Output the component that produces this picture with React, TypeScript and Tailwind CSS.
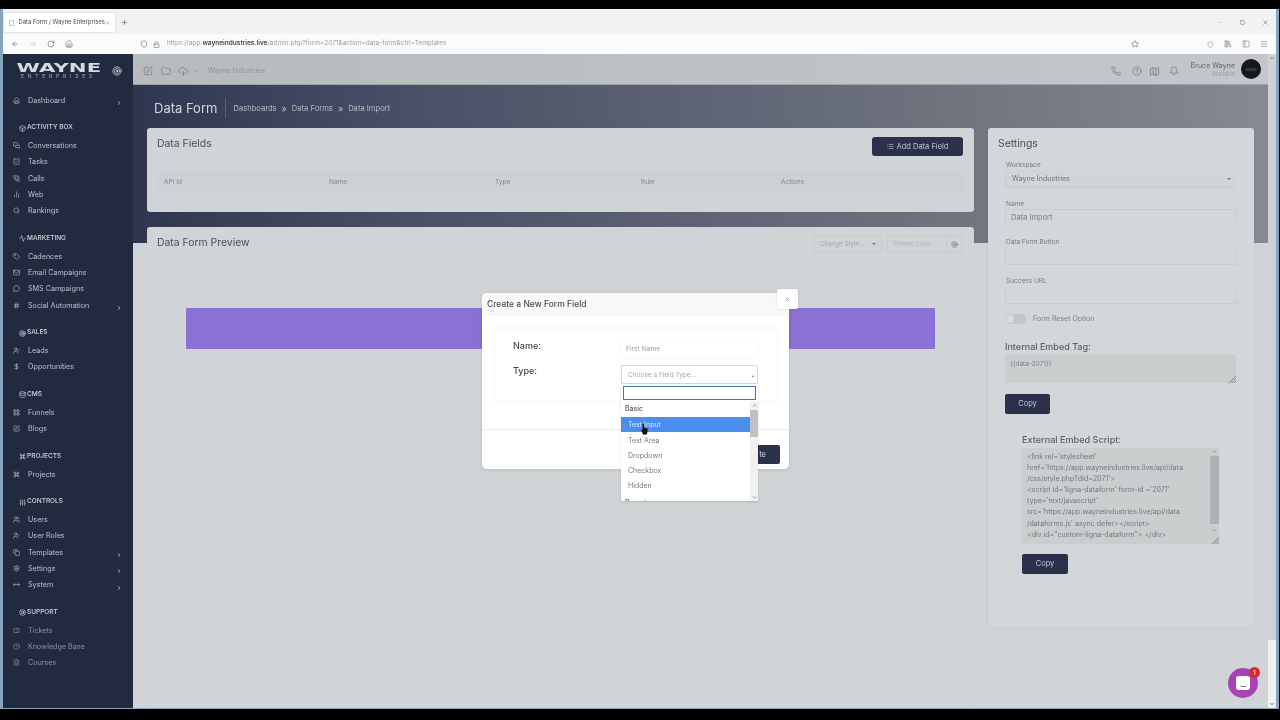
import {
  Activity,
  ArrowLeft,
  ArrowRight,
  BarChart2,
  Bell,
  Box,
  ChevronDown,
  ChevronRight,
  ChevronUp,
  CircleHelp,
  CloudUpload,
  Command,
  Copy,
  Database,
  DollarSign,
  FileText,
  Folder,
  Hash,
  Home,
  House,
  LayoutGrid,
  LibraryBig,
  LifeBuoy,
  List,
  Lock,
  Mail,
  Map,
  Menu,
  MessageCircle,
  MessagesSquare,
  Minus,
  MoveHorizontal,
  PanelLeft,
  Phone,
  PhoneCall,
  Plus,
  RotateCw,
  Search,
  Settings,
  Shield,
  SlidersVertical,
  Square,
  SquareCheck,
  SquarePen,
  Star,
  Tag,
  Target,
  Ticket,
  UserCheck,
  Users,
  X,
} from "lucide-react"

const NavGroups = [
  {
    items: [{ label: "Dashboard", icon: Home, arrow: true }],
  },
  {
    title: "ACTIVITY BOX",
    titleIcon: Box,
    items: [
      { label: "Conversations", icon: MessagesSquare },
      { label: "Tasks", icon: SquareCheck },
      { label: "Calls", icon: PhoneCall },
      { label: "Web", icon: BarChart2 },
      { label: "Rankings", icon: Search },
    ],
  },
  {
    title: "MARKETING",
    titleIcon: Activity,
    items: [
      { label: "Cadences", icon: Tag },
      { label: "Email Campaigns", icon: Mail },
      { label: "SMS Campaigns", icon: MessageCircle },
      { label: "Social Automation", icon: Hash, arrow: true },
    ],
  },
  {
    title: "SALES",
    titleIcon: Target,
    items: [
      { label: "Leads", icon: UserCheck },
      { label: "Opportunities", icon: DollarSign },
    ],
  },
  {
    title: "CMS",
    titleIcon: Database,
    items: [
      { label: "Funnels", icon: LayoutGrid },
      { label: "Blogs", icon: SquarePen },
    ],
  },
  {
    title: "PROJECTS",
    titleIcon: Command,
    items: [{ label: "Projects", icon: Command }],
  },
  {
    title: "CONTROLS",
    titleIcon: SlidersVertical,
    items: [
      { label: "Users", icon: Users },
      { label: "User Roles", icon: UserCheck },
      { label: "Templates", icon: Copy, arrow: true },
      { label: "Settings", icon: Settings, arrow: true },
      { label: "System", icon: MoveHorizontal, arrow: true },
    ],
  },
  {
    title: "SUPPORT",
    titleIcon: LifeBuoy,
    items: [
      { label: "Tickets", icon: Ticket, dim: true },
      { label: "Knowledge Base", icon: CircleHelp, dim: true },
      { label: "Courses", icon: FileText, dim: true },
    ],
  },
]

const FieldTypes = ["Text Area", "Dropdown", "Checkbox", "Hidden"]

function Sidebar() {
  return (
    <aside className="w-[130px] shrink-0 bg-[#222a40] flex flex-col overflow-hidden">
      <div className="h-[31px] shrink-0 flex items-center pl-[14px] pr-[11px] justify-between pt-[3px]">
        <div className="flex flex-col items-center w-[83px]">
          <span className="text-[#d7dade] text-[12.5px] leading-[11px] font-black [font-family:'DejaVu_Sans',sans-serif] scale-x-[1.7]">
            WAYNE
          </span>
          <span className="text-[#a4aab6] text-[5px] leading-[7px] tracking-[3.8px] whitespace-nowrap">
            ENTERPRISES
          </span>
        </div>
        <Target className="w-[10px] h-[10px] text-[#c5c9d0]" />
      </div>
      <nav className="pt-[8px] flex flex-col gap-[11.85px]">
        {NavGroups.map((group, i) => (
          <div key={i} className="flex flex-col">
            {group.title && (
              <div className="h-[14px] mb-[3.3px] pl-[15.5px] flex items-center gap-[1.5px] text-[6.5px] font-medium text-[#d3d6dc]">
                <group.titleIcon className="w-[7px] h-[7px]" />
                {group.title}
              </div>
            )}
            {group.items.map((item) => (
              <div
                key={item.label}
                className={`h-[16.3px] pl-[10px] pr-[11px] flex items-center text-[7.2px] ${
                  "dim" in item && item.dim ? "text-[#8b91a1]" : "text-[#bcc0ca]"
                }`}
              >
                <item.icon className="w-[7px] h-[7px] mr-[8px] mt-[-2px] shrink-0" />
                <span className="flex-1">{item.label}</span>
                {"arrow" in item && item.arrow && (
                  <ChevronRight className="w-[6px] h-[6px] mt-[4px] text-[#d3d6dc]" strokeWidth={3} />
                )}
              </div>
            ))}
          </div>
        ))}
      </nav>
    </aside>
  )
}

function TopBar() {
  return (
    <div className="h-[31px] shrink-0 bg-[linear-gradient(90deg,#b7bbbe,#c3c7c9)] flex items-center pl-[10px] pr-[7px] border-b border-[#9ea3a9]">
      <div className="flex items-center mt-[4px]">
        <SquarePen className="w-[10px] h-[10px] text-[#7f858c] mr-[8px]" />
        <Folder className="w-[10px] h-[10px] text-[#7f858c] mr-[7px]" />
        <CloudUpload className="w-[11px] h-[11px] text-[#7f858c] mr-[4px]" />
        <ChevronDown className="w-[7px] h-[7px] text-[#7f858c] mr-[8px]" />
        <span className="text-[7px] text-[#8f949a]">Wayne Industries</span>
      </div>
      <div className="flex-1" />
      <div className="flex items-center mt-[4px]">
        <Phone className="w-[10px] h-[10px] text-[#7b8087] mr-[11px]" />
        <CircleHelp className="w-[10px] h-[10px] text-[#7b8087] mr-[7px]" />
        <Map className="w-[11px] h-[11px] text-[#7b8087] mr-[9px]" />
        <Bell className="w-[10px] h-[10px] text-[#7b8087] mr-[12px]" />
      </div>
      <div className="flex flex-col items-end mr-[6px]">
        <span className="text-[7px] leading-[9px] font-medium text-[#70757c]">Bruce Wayne</span>
        <span className="text-[5.5px] leading-[8px] text-[#999ea4]">Available</span>
      </div>
      <div className="w-[20px] h-[20px] rounded-full bg-[#16181b] flex items-center justify-center">
        <span className="w-[12px] h-[3px] bg-[#33363a] rounded-full" />
      </div>
    </div>
  )
}

function FieldLabel({ children }: { children: string }) {
  return <div className="text-[6.5px] leading-[8px] text-[#777c82]">{children}</div>
}

function DarkButton({ children, className }: { children: React.ReactNode; className: string }) {
  return (
    <div className={`bg-[#2b304b] rounded-[2px] text-[#c4c7d0] text-[7.5px] flex items-center justify-center ${className}`}>
      {children}
    </div>
  )
}

function ResizeGrip() {
  return (
    <svg width="7" height="7" viewBox="0 0 7 7" className="text-[#777c82]">
      <path d="M7 0L0 7M7 2.5L2.5 7M7 5L5 7" stroke="currentColor" strokeWidth="0.8" />
    </svg>
  )
}

function SettingsCard() {
  return (
    <div className="w-[266px] h-[499px] shrink-0 bg-[#d3d7d9] rounded-[3px] shadow-[0_0_3px_rgba(0,0,0,0.06)] pt-[9px]">
      <div className="pl-[10px] text-[10.4px] leading-[13px] text-[#4a4e54]">Settings</div>
      <div className="pl-[17px] pr-[17px] pt-[11px]">
        <div className="pl-[1px]"><FieldLabel>Workspace</FieldLabel></div>
        <div className="h-[17px] mt-[2px] border-b border-l border-[#c8ccce] bg-[#d1d5d7] flex items-center justify-between px-[6px] text-[7.1px] text-[#6f747a]">
          Wayne Industries
          <span className="w-0 h-0 border-x-[2px] border-x-transparent border-t-[2px] border-t-[#6f747a]" />
        </div>
        <div className="pt-[12px] pl-[1px]"><FieldLabel>Name</FieldLabel></div>
        <div className="h-[16px] mt-[1px] border-t border-x border-[#c8ccce] flex items-center px-[5px] text-[7.5px] text-[#777c82]">
          Data Import
        </div>
        <div className="pt-[13px] pl-[1px]"><FieldLabel>Data Form Button</FieldLabel></div>
        <div className="h-[18px] mt-[1px] border-b border-x border-[#c8ccce]" />
        <div className="pt-[12px] pl-[1px]"><FieldLabel>Success URL</FieldLabel></div>
        <div className="h-[18px] mt-[1px] border-b border-x border-[#c8ccce]" />
        <div className="flex items-center mt-[10px] h-[10px] gap-[7px]">
          <div className="w-[21px] h-[10px] rounded-full bg-[#c2c6c8] flex items-center pl-[1px]">
            <span className="w-[8px] h-[8px] rounded-full bg-[#d8dbdd]" />
          </div>
          <span className="text-[7px] text-[#7d8288]">Form Reset Option</span>
        </div>
        <div className="mt-[18px] text-[9px] leading-[10px] font-medium text-[#5a5f65]">Internal Embed Tag:</div>
        <div className="h-[29px] mt-[2px] w-[231px] bg-[#cacecf] flex justify-between">
          <span className="pl-[5px] pt-[6px] text-[6.5px] text-[#7b8086]">{"{{data-2071}}"}</span>
          <span className="self-end flex"><ResizeGrip /></span>
        </div>
        <DarkButton className="w-[45px] h-[20px] mt-[11px]">Copy</DarkButton>
        <div className="pl-[17px] pt-[21px]">
          <div className="text-[9.1px] leading-[10px] font-medium text-[#5a5f65]">External Embed Script:</div>
          <div className="h-[96px] w-[197px] mt-[3px] bg-[#cacecf] flex">
            <div className="flex-1 min-w-0 pl-[5px] pt-[3px] text-[7.05px] leading-[11.1px] text-[#75797f] whitespace-nowrap">
              <div>{"<link rel='stylesheet'"}</div>
              <div>{"href='https://app.wayneindustries.live/api/data"}</div>
              <div>{"/css/style.php?did=2071'>"}</div>
              <div>{"<script id='ligna-dataform' form-id ='2071'"}</div>
              <div>{"type='text/javascript'"}</div>
              <div>{"src='https://app.wayneindustries.live/api/data"}</div>
              <div>{"/dataforms.js' async defer></script>"}</div>
              <div>{'<div id="custom-ligna-dataform"> </div>'}</div>
            </div>
            <div className="w-[9px] flex flex-col items-center">
              <ChevronUp className="w-[5px] h-[5px] mt-[1px] text-[#6f747a]" strokeWidth={3} />
              <div className="w-[9px] h-[68px] mt-[2px] bg-[#aeb2b4]" />
              <ChevronDown className="w-[5px] h-[5px] mt-[4px] text-[#6f747a]" strokeWidth={3} />
              <div className="flex-1" />
              <span className="self-end flex"><ResizeGrip /></span>
            </div>
          </div>
          <DarkButton className="w-[46px] h-[20px] mt-[10px]">Copy</DarkButton>
        </div>
      </div>
    </div>
  )
}

function Modal() {
  return (
    <div className="absolute left-[482px] top-[293px] w-[307px] h-[176px] bg-white rounded-[5px] shadow-[0_1px_4px_rgba(0,0,0,0.12)]">
      <div className="h-[23px] bg-[#f8f8f8] rounded-t-[5px] flex items-center pl-[5px] text-[8.5px] font-medium text-[#4a4d52]">
        Create a New Form Field
      </div>
      <div className="absolute left-[295px] top-[-4px] w-[21px] h-[20px] bg-white rounded-[2px] shadow-[0_0_3px_rgba(0,0,0,0.1)] flex items-center justify-center">
        <X className="w-[7px] h-[7px] text-[#7f6fc4]" />
      </div>
      <div className="mx-[14px] mt-[13px] h-[72px] w-[280px] bg-white rounded-[2px] shadow-[0_0_6px_rgba(0,0,0,0.06)] pl-[17px] pt-[11px] relative">
        <div className="flex">
          <span className="w-[108px] text-[9px] font-medium text-[#44474c] mt-[-1px]">Name:</span>
          <div className="w-[137px] h-[18px] rounded-[2px] shadow-[0_0_2px_rgba(0,0,0,0.1)] flex items-center pl-[5px] pt-[1px] text-[6.7px] text-[#9a9da2]">
            First Name
          </div>
        </div>
        <div className="flex mt-[7px]">
          <span className="w-[108px] text-[9px] font-medium text-[#44474c] mt-[-1px]">Type:</span>
          <div className="w-[137px] h-[19px] rounded-t-[2px] border border-[#d8d6e6] flex items-center justify-between pl-[6px] pr-[3px] pt-[2px] text-[6.5px] text-[#a4a7ab]">
            Choose a Field Type...
            <span className="w-0 h-0 border-x-[1.5px] border-x-transparent border-b-[2px] border-b-[#6f747a]" />
          </div>
        </div>
      </div>
      <div className="mt-[28px] h-[40px] border-t border-[#ececec] flex items-center justify-end pr-[9px]">
        <div className="w-[40px] h-[19px] mt-[10px] bg-[#2b304b] rounded-[2px] text-[7.5px] text-[#d4d6de] flex items-center justify-end pr-[14px]">
          te
        </div>
      </div>
    </div>
  )
}

function Dropdown() {
  return (
    <div className="absolute left-[621px] top-[384px] w-[137px] h-[117px] bg-white shadow-[0_1px_2px_rgba(0,0,0,0.15)] overflow-hidden flex">
      <div className="w-[129px] shrink-0">
        <div className="ml-[2px] mt-[2px] w-[133px] h-[14px] border-[1.5px] border-[#3f78a8] bg-white relative z-10" />
        <div className="h-[17px] pl-[4px] pt-[2px] flex items-center text-[7px] font-medium text-[#5a5e64]">Basic</div>
        <div className="h-[15px] bg-[#4a8ff0] pl-[7px] pt-[1px] flex items-center text-[7px] text-[#dfe9fb]">Text Input</div>
        {FieldTypes.map((name) => (
          <div key={name} className="h-[15.2px] pl-[7px] pt-[3px] flex items-center text-[7px] text-[#76797f]">
            {name}
          </div>
        ))}
        <div className="h-[20px] pl-[4px] flex items-center text-[7px] font-medium text-[#5a5e64]">Presets</div>
      </div>
      <div className="w-[8px] mt-[18px] bg-[#f1f1f1] pt-[1px] flex flex-col items-center">
        <ChevronUp className="w-[5px] h-[5px] text-[#55585d]" strokeWidth={3} />
        <div className="w-[8px] h-[27px] mt-[2px] bg-[#c1c1c1]" />
        <div className="flex-1" />
        <ChevronDown className="w-[5px] h-[5px] mb-[1px] text-[#55585d]" strokeWidth={3} />
      </div>
    </div>
  )
}

function Cursor() {
  return (
    <svg className="absolute left-[641px] top-[423px]" width="7" height="13" viewBox="0 0 7 13">
      <path d="M1.5 1.5c0-1 1.6-1 1.6 0v3.2l2.6.6c.8.2 1.1.8 1 1.5L6 11.5H2L.4 7.3c-.2-.8.7-1.2 1.1-.6V1.5z" fill="#111" />
    </svg>
  )
}

export default function App() {
  return (
    <div className="relative w-[1280px] h-[720px] overflow-hidden bg-black flex flex-col pt-[9px] pb-[11px] pr-[1px] blur-[0.35px] [font-family:Inter,'Noto_Sans',sans-serif]">
      <div className="flex-1 min-h-0 flex flex-col bg-[#86a3bf] pl-[3px] pr-[3px] pb-[1px]">
        {/* browser chrome */}
        <div className="h-[25px] shrink-0 bg-[#f2f2f3] flex items-center pt-[2px]">
          <div className="w-[111px] h-[19px] ml-[1px] bg-white rounded-[2px] shadow-[0_0_2px_rgba(0,0,0,0.2)] flex items-center pl-[5px] text-[5.9px] text-[#44474c]">
            <span className="w-[6px] h-[6px] mr-[4px] border border-[#c8c8c8]" />
            <span className="flex-1 whitespace-nowrap">Data Form / Wayne Enterprises</span>
            <X className="w-[6px] h-[6px] mr-[5px] text-[#55585d]" />
          </div>
          <Plus className="w-[7px] h-[7px] ml-[6px] text-[#55585d]" />
          <div className="flex-1" />
          <Minus className="w-[5px] h-[5px] mr-[17px] text-[#b5b7ba]" />
          <Square className="w-[5px] h-[5px] mr-[17px] text-[#55585d]" />
          <X className="w-[7px] h-[7px] mr-[7px] text-[#55585d]" />
        </div>
        <div className="h-[20px] shrink-0 bg-[#fbfbfb] flex items-center text-[#6b6e73]">
          <ArrowLeft className="w-[8px] h-[8px] ml-[8px]" />
          <ArrowRight className="w-[8px] h-[8px] ml-[10px] text-[#bcbec1]" />
          <RotateCw className="w-[8px] h-[8px] ml-[10px]" />
          <House className="w-[8px] h-[8px] ml-[10px]" />
          <Shield className="w-[8px] h-[8px] ml-[67px]" />
          <Lock className="w-[7px] h-[7px] ml-[5px]" />
          <span className="ml-[7px] text-[6.5px] text-[#9a9da1] whitespace-nowrap">
            https://app.<span className="font-semibold text-[#44474c]">wayneindustries.live</span>/admin.php?form=2071&action=data-form&ctrl=Templates
          </span>
          <div className="flex-1" />
          <Star className="w-[8px] h-[8px] mr-[68px]" />
          <Shield className="w-[7px] h-[7px] mr-[10px] text-[#8a8d91]" />
          <LibraryBig className="w-[8px] h-[8px] mr-[10px] text-[#8a8d91]" />
          <PanelLeft className="w-[8px] h-[8px] mr-[10px] text-[#8a8d91]" />
          <Menu className="w-[8px] h-[8px] mr-[8px] text-[#8a8d91]" />
        </div>
        {/* app */}
        <div className="flex-1 min-h-0 flex">
          <Sidebar />
          <div className="flex-1 min-w-0 flex flex-col overflow-hidden">
            <TopBar />
            <div className="flex-1 min-h-0 bg-[#d0d4d6] bg-[linear-gradient(90deg,#2f3650_0%,#4a5066_25%,#5e6475_50%,#71767f_75%,#868a92_100%)] bg-no-repeat bg-[length:100%_158px] pl-[14px] pr-[14px] overflow-hidden">
              <div className="h-[43px] flex items-center pt-[2px] pl-[7px]">
                <span className="text-[13px] text-[#d5d7dc] pr-[8px] border-r border-[#5e6475] leading-[20px]">Data Form</span>
                <span className="ml-[7px] mt-[2px] flex items-center gap-[5px] text-[7.6px] text-[#b9bcc5]">
                  Dashboards <span className="text-[9px]">»</span> Data Forms <span className="text-[9px]">»</span> Data Import
                </span>
              </div>
              <div className="flex gap-[14px] items-start">
                <div className="w-[827px] shrink-0 flex flex-col gap-[15px]">
                  <div className="h-[84px] bg-[#d0d4d6] rounded-[3px] shadow-[0_0_2px_rgba(0,0,0,0.08)] px-[10px] pt-[9px]">
                    <div className="flex justify-between h-[35px]">
                      <span className="text-[10.4px] leading-[13px] text-[#4a4e54]">Data Fields</span>
                      <DarkButton className="w-[91px] h-[19px] mr-[1px] gap-[3px] rounded-[3px]">
                        <List className="w-[7px] h-[7px]" /> Add Data Field
                      </DarkButton>
                    </div>
                    <div className="h-[20px] flex items-center bg-[#cdd1d3] pl-[7px] pt-[1px] text-[6.5px] text-[#85898f]">
                      <span className="w-[165px]">API Id</span>
                      <span className="w-[166px]">Name</span>
                      <span className="w-[146px]">Type</span>
                      <span className="w-[140px]">Rule</span>
                      <span>Actions</span>
                    </div>
                  </div>
                  <div className="h-[490px] bg-[#d0d4d6] rounded-[3px] shadow-[0_0_2px_rgba(0,0,0,0.05)] px-[10px] pt-[9px]">
                    <div className="flex items-start">
                      <span className="flex-1 text-[10.4px] leading-[13px] text-[#4a4e54]">Data Form Preview</span>
                      <div className="w-[68px] h-[18px] mt-[-1px] border border-[#c8ccce] rounded-[2px] flex items-center justify-between px-[5px] text-[6.2px] text-[#a3a7ab]">
                        Change Style...
                        <span className="w-0 h-0 border-x-[2px] border-x-transparent border-t-[2px] border-t-[#6f747a]" />
                      </div>
                      <div className="w-[75px] h-[18px] mt-[-1px] ml-[5px] mr-[2px] border border-[#c8ccce] rounded-[2px] flex items-center pl-[5px] text-[6.2px] text-[#b0b4b8]">
                        <span className="flex-1">Theme Color</span>
                        <span className="w-[15px] h-full border-l border-[#c8ccce] flex items-center justify-center">
                          <Target className="w-[7px] h-[7px] text-[#777c82]" />
                        </span>
                      </div>
                    </div>
                    <div className="mt-[55px] mx-[29px] h-[41px] bg-[#8b70d5] rounded-[1px]" />
                  </div>
                </div>
                <SettingsCard />
              </div>
            </div>
          </div>
          {/* page scrollbar */}
          <div className="w-[8px] shrink-0 flex flex-col bg-[#cfd3d5]">
            <ChevronUp className="w-[6px] h-[6px] mx-[1px] mt-[1px] text-[#55585d]" strokeWidth={3} />
            <div className="flex-1" />
            <div className="h-[68px] bg-[#f1f1f1] flex flex-col justify-end items-center">
              <ChevronDown className="w-[6px] h-[6px] mb-[1px] text-[#55585d]" strokeWidth={3} />
            </div>
          </div>
        </div>
      </div>
      <Modal />
      <Dropdown />
      <Cursor />
      {/* chat bubble */}
      <div className="absolute left-[1228px] top-[668px] w-[30px] h-[30px] rounded-full bg-[#a943b5] flex items-center justify-center">
        <div className="w-[14px] h-[14px] bg-white rounded-[3px] flex items-end justify-center pb-[3px]">
          <span className="w-[7px] h-[2px] border-b border-[#777c82] rounded-b-full" />
        </div>
      </div>
      <div className="absolute left-[1249px] top-[667px] w-[11px] h-[11px] rounded-full bg-[#d42a2a] text-white text-[6px] flex items-center justify-center">
        1
      </div>
    </div>
  )
}
